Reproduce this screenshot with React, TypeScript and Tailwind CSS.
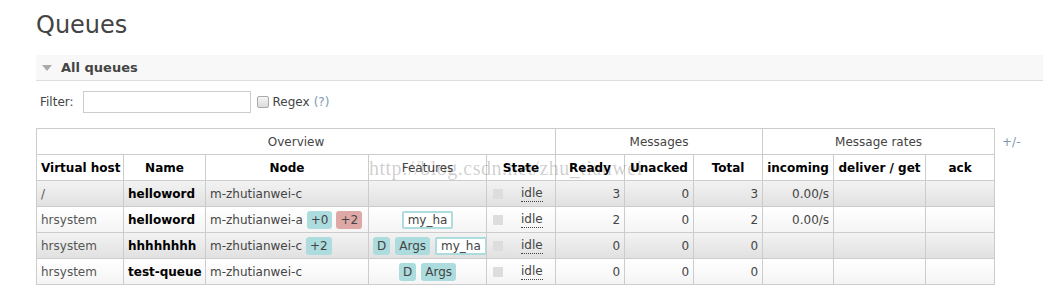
import React from "react";

type Row = {
  vhost: string;
  name: string;
  node: string;
  mirrors: { label: string; red?: boolean }[];
  features: { label: string; outline?: boolean }[];
  ready: string;
  unacked: string;
  total: string;
  incoming: string;
};

const rows: Row[] = [
  { vhost: "/", name: "helloword", node: "m-zhutianwei-c", mirrors: [], features: [], ready: "3", unacked: "0", total: "3", incoming: "0.00/s" },
  { vhost: "hrsystem", name: "helloword", node: "m-zhutianwei-a", mirrors: [{ label: "+0" }, { label: "+2", red: true }], features: [{ label: "my_ha", outline: true }], ready: "2", unacked: "0", total: "2", incoming: "0.00/s" },
  { vhost: "hrsystem", name: "hhhhhhhh", node: "m-zhutianwei-c", mirrors: [{ label: "+2" }], features: [{ label: "D" }, { label: "Args" }, { label: "my_ha", outline: true }], ready: "0", unacked: "0", total: "0", incoming: "" },
  { vhost: "hrsystem", name: "test-queue", node: "m-zhutianwei-c", mirrors: [], features: [{ label: "D" }, { label: "Args" }], ready: "0", unacked: "0", total: "0", incoming: "" },
];

const widths = [87, 82, 163, 118, 69, 69, 69, 69, 71, 92, 69];

function Badge({ label, red, outline }: { label: string; red?: boolean; outline?: boolean }) {
  if (outline)
    return (
      <span className="inline-block h-[18px] rounded-[2px] border-2 border-[#acdcdd] bg-white px-[4px] leading-[14px] text-[#444]">
        {label}
      </span>
    );
  return (
    <span
      className={`inline-block h-[18px] rounded-[3px] px-[4px] leading-[18px] text-[#444] ${red ? "bg-[#dda8a6]" : "bg-[#acdcdd]"}`}
    >
      {label}
    </span>
  );
}

export default function App() {
  const td = "border border-[#cccccc] px-[4px] h-[26px] whitespace-nowrap overflow-hidden";
  return (
    <div className="h-[300px] w-[1043px] bg-white text-[12px] text-[#444] [font-family:'DejaVu_Sans',Verdana,sans-serif]">
      <h1 className="pl-[36px] pt-[10px] text-[24px] leading-[30px] font-normal text-[#444]">Queues</h1>

      <div className="ml-[36px] mt-[15px] flex h-[26px] items-center border-b border-[#dddddd] bg-[#f8f8f8] pl-[6px]">
        <svg width="10" height="6" viewBox="0 0 10 6" className="mr-[9px]">
          <path d="M0 0 L10 0 L5 6 Z" fill="#aaaaaa" />
        </svg>
        <span className="text-[13px] font-bold text-[#444]">All queues</span>
      </div>

      <div className="ml-[40px] mt-[10px] flex h-[22px] items-center">
        <span className="mr-[9px] text-[#444]">Filter:</span>
        <input className="h-[22px] w-[168px] border border-[#cccccc] bg-white" />
        <span className="ml-[6px] inline-block h-[12px] w-[12px] rounded-[2px] border border-[#aaaaaa] bg-gradient-to-b from-[#f4f4f4] to-[#dcdcdc]" />
        <span className="ml-[4px] text-[#444]">Regex</span>
        <span className="ml-[4px] text-[#7e98b0]">(?)</span>
      </div>

      <div className="relative ml-[36px] mt-[15px] flex items-start">
        <table className="table-fixed border-collapse" style={{ width: 959 }}>
          <colgroup>
            {widths.map((w, i) => (
              <col key={i} style={{ width: w }} />
            ))}
          </colgroup>
          <thead>
            <tr className="bg-white">
              <th colSpan={5} className={`${td} font-normal text-[#444]`}>Overview</th>
              <th colSpan={3} className={`${td} font-normal text-[#444]`}>Messages</th>
              <th colSpan={3} className={`${td} font-normal text-[#444]`}>Message rates</th>
            </tr>
            <tr className="bg-white text-black">
              {["Virtual host", "Name", "Node", "Features", "State", "Ready", "Unacked", "Total", "incoming", "deliver / get", "ack"].map((h) => (
                <th key={h} className={`${td} ${h === "Features" ? "font-normal text-[#444]" : "font-bold"}`}>
                  {h}
                </th>
              ))}
            </tr>
          </thead>
          <tbody>
            {rows.map((r, i) => (
              <tr
                key={i}
                className={i % 2 === 0 ? "bg-gradient-to-b from-[#f3f3f3] to-[#e0e0e0]" : "bg-gradient-to-b from-white to-[#f4f4f4]"}
              >
                <td className={`${td} text-[#555]`}>{r.vhost}</td>
                <td className={`${td} font-bold text-black`}>{r.name}</td>
                <td className={td}>
                  <span className="inline-flex items-center gap-[4px]">
                    <span>{r.node}</span>
                    {r.mirrors.map((m) => (
                      <Badge key={m.label} label={m.label} red={m.red} />
                    ))}
                  </span>
                </td>
                <td className={`${td} text-center`}>
                  <span className="inline-flex items-center gap-[5px]">
                    {r.features.map((f) => (
                      <Badge key={f.label} label={f.label} outline={f.outline} />
                    ))}
                  </span>
                </td>
                <td className={td}>
                  <span className="flex items-center">
                    <span className="ml-[2px] inline-block h-[10px] w-[10px] bg-[#dddddd]" />
                    <span className="ml-[18px] border-b border-dotted border-[#444] leading-[15px]">idle</span>
                  </span>
                </td>
                <td className={`${td} text-right`}>{r.ready}</td>
                <td className={`${td} text-right`}>{r.unacked}</td>
                <td className={`${td} text-right`}>{r.total}</td>
                <td className={`${td} text-right`}>{r.incoming}</td>
                <td className={td}></td>
                <td className={td}></td>
              </tr>
            ))}
          </tbody>
        </table>
        <span className="ml-[7px] mt-[5px] text-[#7e98b0]">+/-</span>
        <span className="pointer-events-none absolute left-[333px] top-[25px] z-10 text-[20px] tracking-[0.5px] text-black/20 [font-family:'Liberation_Serif',serif]">
          http://blog.csdn.net/zhu_tianwei
        </span>
      </div>
    </div>
  );
}
